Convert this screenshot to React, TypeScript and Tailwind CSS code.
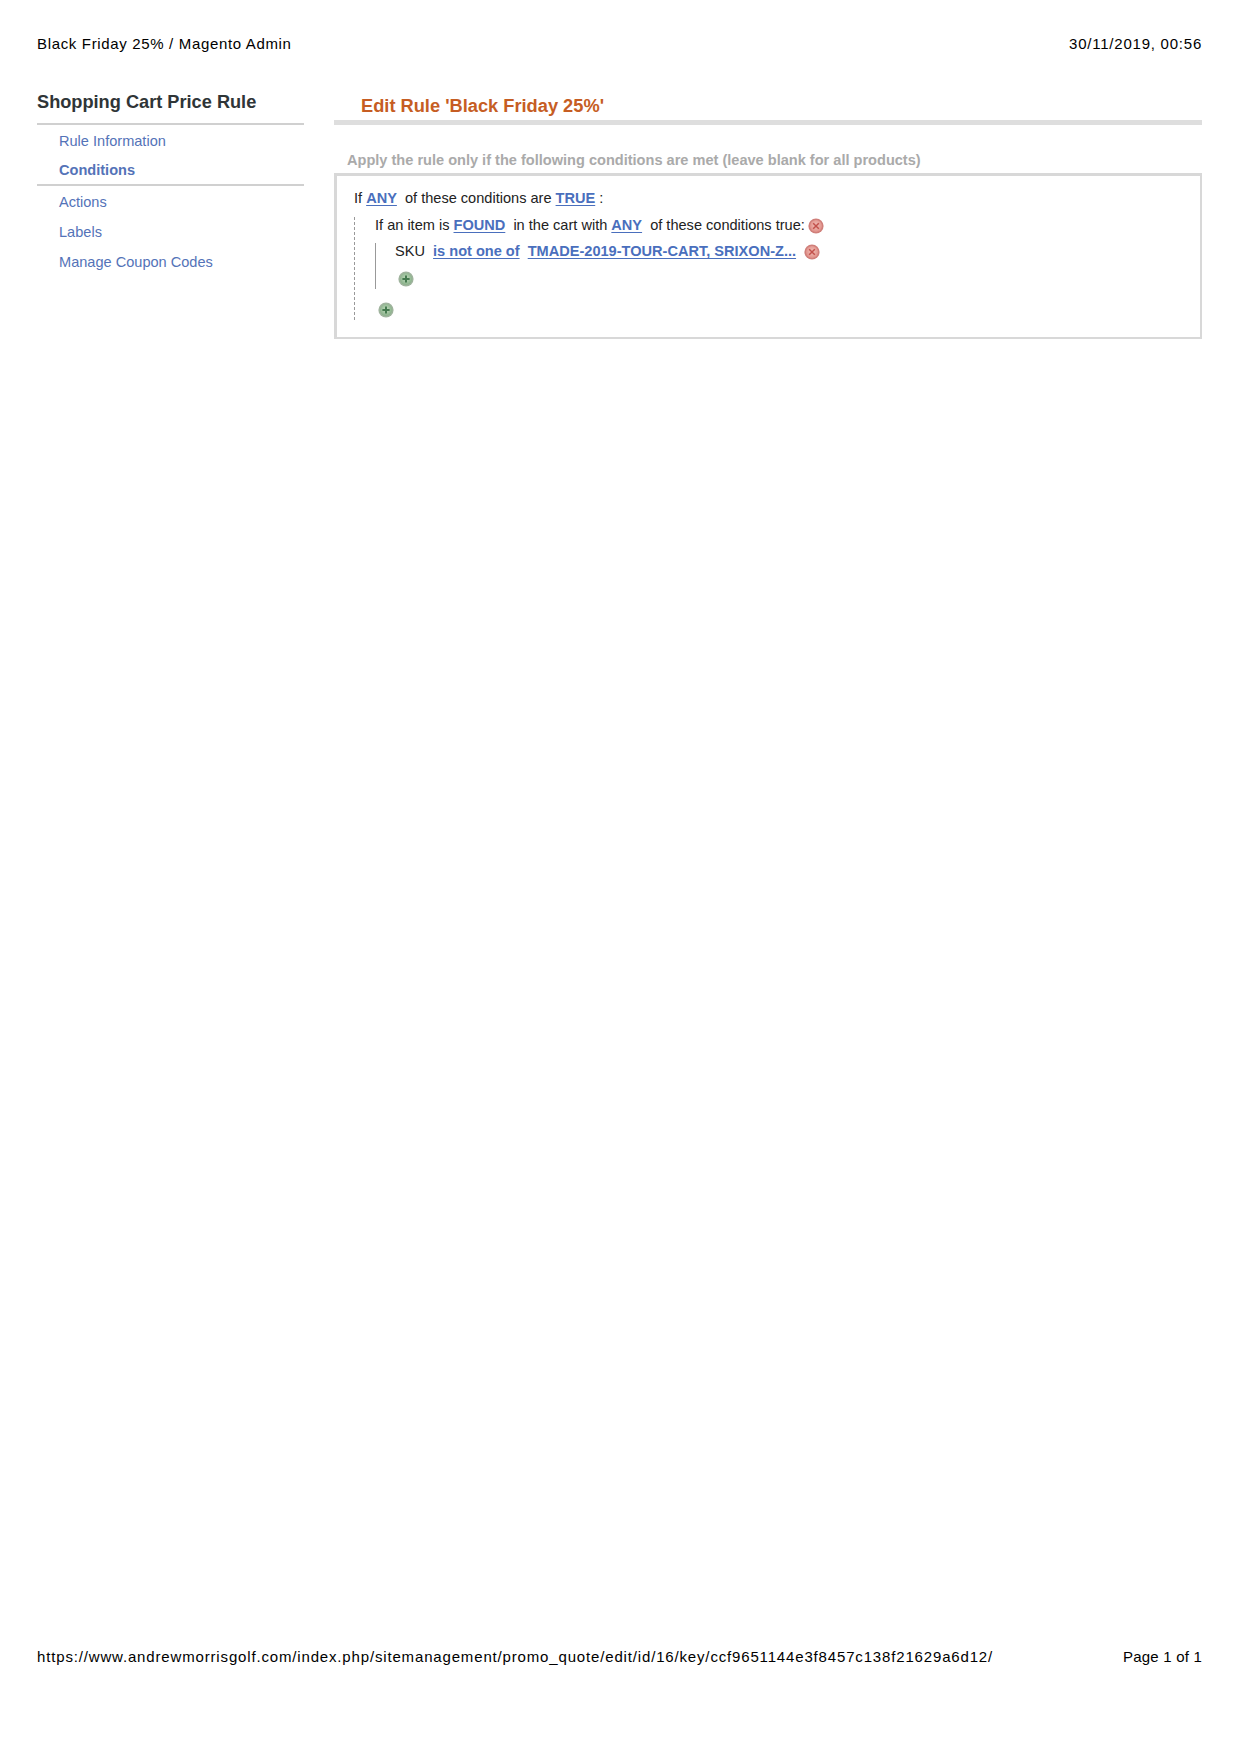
const sans = "font-['Liberation_Sans',Arial,sans-serif]";

function AddIcon() {
  return (
    <svg width="16" height="16" viewBox="0 0 16 16" className="shrink-0">
      <defs>
        <radialGradient id="addFill" cx="50%" cy="45%" r="55%">
          <stop offset="0%" stopColor="#c3dcc0" />
          <stop offset="100%" stopColor="#88b088" />
        </radialGradient>
      </defs>
      <circle cx="8" cy="8" r="7.6" fill="#9fb39d" />
      <circle cx="8" cy="8" r="6" fill="url(#addFill)" />
      <path d="M8 4.4v7.2M4.4 8h7.2" stroke="#44794e" strokeWidth="2" />
    </svg>
  );
}

function RemoveIcon() {
  return (
    <svg width="16" height="16" viewBox="0 0 16 16" className="shrink-0">
      <defs>
        <radialGradient id="removeFill" cx="50%" cy="45%" r="55%">
          <stop offset="0%" stopColor="#f2c0b8" />
          <stop offset="100%" stopColor="#e08f88" />
        </radialGradient>
      </defs>
      <circle cx="8" cy="8" r="7.6" fill="#d07f7a" />
      <circle cx="8" cy="8" r="6" fill="url(#removeFill)" />
      <path d="M5.2 5.2l5.6 5.6M10.8 5.2l-5.6 5.6" stroke="#c2504b" strokeWidth="1.5" />
    </svg>
  );
}

function RuleLink({ children }: { children: React.ReactNode }) {
  return <a className="font-bold text-[#4a6fbd] underline underline-offset-2">{children}</a>;
}

export default function App() {
  return (
    <div className={`${sans} flex h-[1753px] flex-col bg-white pr-[38px] pl-[37px] text-black`}>
      <header className="flex justify-between pt-[35px] text-[15px] leading-[18px]">
        <span className="tracking-[0.66px]">Black Friday 25% / Magento Admin</span>
        <span className="tracking-[0.77px]">30/11/2019, 00:56</span>
      </header>

      <div className="mt-[39px] flex gap-[30px]">
        {/* sidebar */}
        <aside className="w-[267px] shrink-0">
          <h3 className="border-b-2 border-[#d0d0d0] pb-[10px] text-[18.2px] leading-[21px] font-bold text-[#2f3537]">
            Shopping Cart Price Rule
          </h3>
          <ul className="text-[14.57px] text-[#5473b8]">
            <li className="pt-[8px] pl-[22px] leading-[17px]">Rule Information</li>
            <li className="border-b-2 border-[#d0d0d0] pt-[12px] pb-[5px] pl-[22px] leading-[17px] font-bold">Conditions</li>
            <li className="pt-[8px] pl-[22px] leading-[17px]">Actions</li>
            <li className="pt-[13px] pl-[22px] leading-[17px]">Labels</li>
            <li className="pt-[13px] pl-[22px] leading-[17px]">Manage Coupon Codes</li>
          </ul>
        </aside>

        {/* rule conditions */}
        <main className="min-w-0 flex-1">
          <h3 className="mt-[3px] border-b-[5px] border-[#dedede] pb-[4px] pl-[27px] text-[18.25px] leading-[21px] font-bold text-[#c65d23]">
            Edit Rule 'Black Friday 25%'
          </h3>
          <p className="mt-[27px] pl-[13px] text-[14.57px] leading-[17px] font-bold text-[#aaaaaa]">
            Apply the rule only if the following conditions are met (leave blank for all products)
          </p>
          <div className="mt-[4px] h-[166px] border-2 border-t-[3px] border-l-[3px] border-[#d8d8d8] pt-[14px] pl-[17px] text-[14.57px] leading-[17px] text-[#222]">
            <div>
              If <RuleLink>ANY</RuleLink>&nbsp; of these conditions are <RuleLink>TRUE</RuleLink> :
            </div>
            <div className="mt-[10px] border-l border-dashed border-[#999] pl-[20px]">
              <div className="flex items-center gap-[3px]">
                <span>
                  If an item is <RuleLink>FOUND</RuleLink>&nbsp; in the cart with <RuleLink>ANY</RuleLink>&nbsp; of these conditions true:
                </span>
                <RemoveIcon />
              </div>
              <div className="mt-[9px] border-l border-[#999] pl-[19px]">
                <div className="flex items-center gap-[8px]">
                  <span>
                    SKU&nbsp; <RuleLink>is not one of</RuleLink>&nbsp; <RuleLink>TMADE-2019-TOUR-CART, SRIXON-Z...</RuleLink>
                  </span>
                  <RemoveIcon />
                </div>
                <div className="mt-[11px] pb-[2px] pl-[3px]">
                  <AddIcon />
                </div>
              </div>
              <div className="mt-[13px] pb-[2px] pl-[3px]">
                <AddIcon />
              </div>
            </div>
          </div>
        </main>
      </div>

      <footer className="mt-auto mb-[87px] flex justify-between text-[15px] leading-[18px]">
        <span className="tracking-[0.84px]">https://www.andrewmorrisgolf.com/index.php/sitemanagement/promo_quote/edit/id/16/key/ccf9651144e3f8457c138f21629a6d12/</span>
        <span className="tracking-[0.2px]">Page 1 of 1</span>
      </footer>
    </div>
  );
}
